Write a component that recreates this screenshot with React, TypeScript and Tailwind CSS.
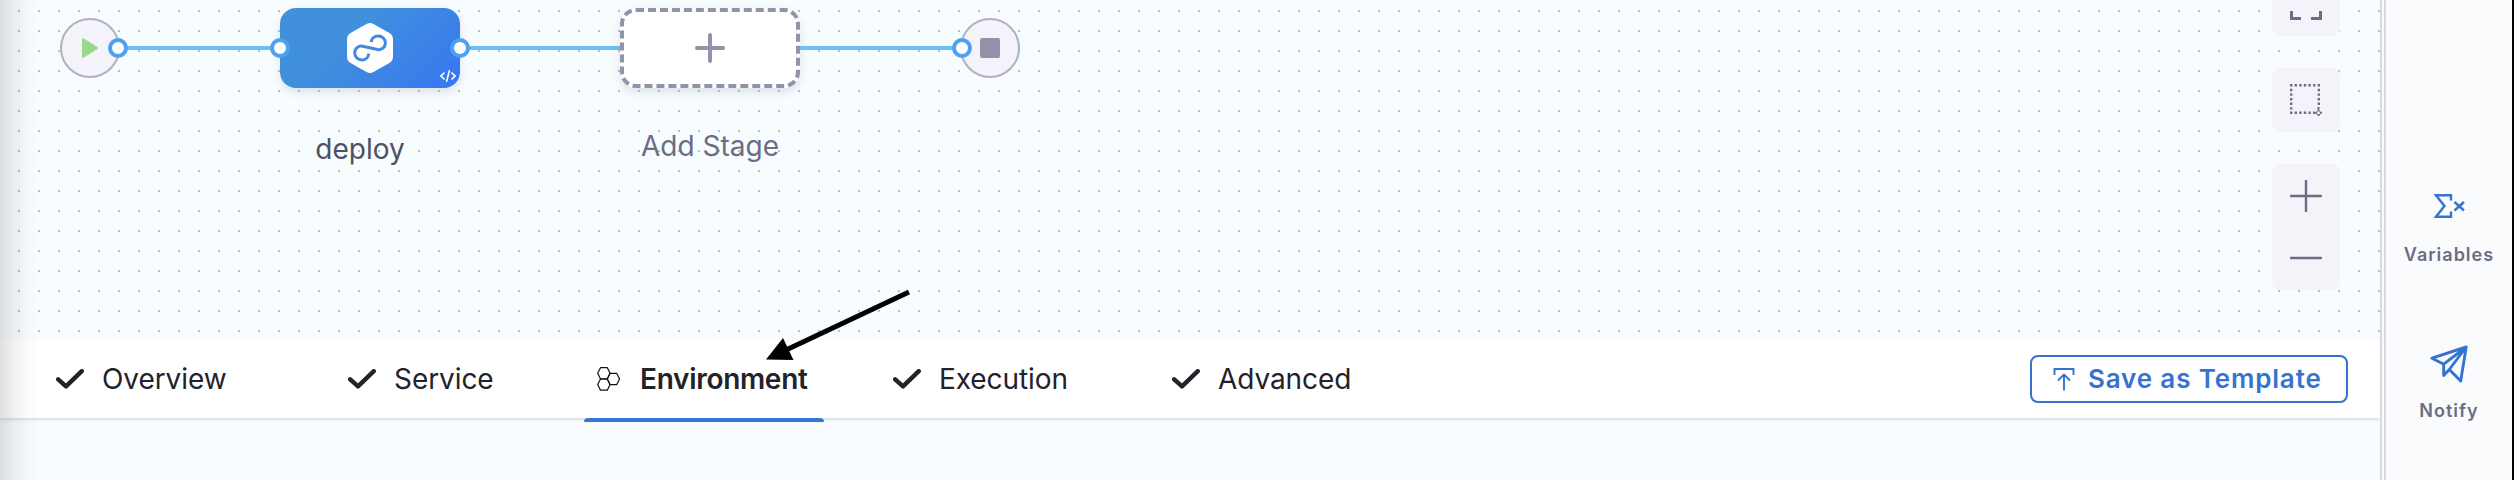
import React from "react";

const tabs = [
  { label: "Overview", box: "ml-14 w-[292px]", icon: "mr-[18px]" },
  { label: "Service", box: "w-[236px]", icon: "mr-[18px]" },
  { label: "Environment", box: "w-[240px] pl-3", icon: "mr-[20px]", active: true },
  { label: "Execution", box: "ml-[69px] w-[279px]", icon: "mr-[18px]" },
  { label: "Advanced", box: "w-[240px]", icon: "mr-[18px]" },
];

function Check() {
  return (
    <svg className="h-5 w-7 shrink-0" viewBox="0 0 28 20" fill="none">
      <path d="M2.2 10.3 L10 17.4 L25.8 2.2" stroke="#22222a" strokeWidth="4.4" strokeLinecap="round" strokeLinejoin="round" />
    </svg>
  );
}

function Hexes() {
  const hex = (x: number, y: number) =>
    `M${x - 6.2} ${y} L${x - 3.4} ${y - 5.6} H${x + 3.4} L${x + 6.2} ${y} L${x + 3.4} ${y + 5.6} H${x - 3.4} Z`;
  return (
    <svg className="h-6 w-6 shrink-0" viewBox="0 0 24 24" fill="none" stroke="#111" strokeWidth="1.2" strokeLinejoin="round">
      <path d={hex(7.9, 6.3)} />
      <path d={hex(7.9, 17.6)} />
      <path d={hex(17.4, 12)} />
    </svg>
  );
}

function Port({ side }: { side: string }) {
  return <span className={`absolute top-1/2 z-10 size-5 -translate-y-1/2 rounded-full border-4 border-[#4fa0f1] bg-white ${side}`} />;
}

function Line({ width }: { width: string }) {
  return <div className={`h-1 bg-[#69c3f2] ${width}`} />;
}

export default function App() {
  return (
    <div className="relative flex h-[480px] w-[2514px] overflow-hidden bg-[#fafbfd] font-['Inter',sans-serif]">
      <main className="flex w-[2380px] shrink-0 flex-col overflow-hidden bg-[#f8fcff]">
        <section className="relative z-10 flex h-[340px] justify-between bg-[#f7fcff]">
          <svg className="absolute inset-0 h-full w-full">
            <defs>
              <pattern id="dots" width="20" height="20" patternUnits="userSpaceOnUse">
                <rect x="18" y="10" width="2" height="2" fill="#b8bec2" />
              </pattern>
            </defs>
            <rect width="100%" height="100%" fill="url(#dots)" />
          </svg>

          <div className="relative flex items-start pt-2 pl-[60px]">
            <div className="flex h-20 items-center">
              <div className="relative flex size-[60px] items-center justify-center rounded-full border-2 border-[#b0b1c4] bg-[#f4f3f9]">
                <svg className="h-5 w-4" viewBox="0 0 16 20">
                  <path d="M0 1.5Q0-.5 2 .5L15 8.8Q16.7 10 15 11.2L2 19.6Q0 20.6 0 18.5Z" fill="#9bd88b" />
                </svg>
                <Port side="-right-2.5" />
              </div>
              <Line width="w-[160px]" />
            </div>
            <div className="flex w-[180px] flex-col items-center">
              <div className="relative flex h-20 w-[180px] items-center justify-center rounded-2xl bg-[linear-gradient(135deg,#4190dc_35%,#3878f0_95%)] shadow-[0_4px_8px_rgba(96,97,112,0.16)]">
                <Port side="-left-2.5" />
                <svg className="h-[50px] w-[46px]" viewBox="0 0 46 50" fill="none">
                  <path d="M19.500 1Q23-1 26.500 1L42 9.800Q46 12 46 16.500V33.500Q46 38 42 40.200L26.500 49Q23 51 19.500 49L4 40.200Q0 38 0 33.500V16.500Q0 12 4 9.800Z" fill="#fff" />
                  <path d="M24.200 19.200C24.500 15.500 27.500 13 31.200 13C35.200 13 38.400 16 38.400 20C38.400 24.300 34.700 27.300 30.500 26.500L15.800 23.200C11.500 22.400 7.700 25.500 7.700 29.800C7.700 33.800 10.800 36.900 14.800 36.900C18.600 36.900 21.500 34.200 21.700 30.500" stroke="#4189e2" strokeWidth="3" />
                </svg>
                <svg className="absolute right-1 bottom-1.5 h-3 w-4" viewBox="0 0 16 12" fill="none" stroke="#fff" strokeWidth="1.6">
                  <path d="M4.500 2.500L1 6L4.500 9.500M11.500 2.500L15 6L11.500 9.500M9.500 .3L6.500 11.700" />
                </svg>
                <Port side="-right-2.5" />
              </div>
              <p className="mt-[43px] pr-5 text-[28px] leading-[36px] text-[#4f5162]">deploy</p>
            </div>
            <div className="flex h-20 items-center">
              <Line width="w-[160px]" />
            </div>
            <div className="flex w-[180px] flex-col items-center">
              <div className="flex h-20 w-[180px] items-center justify-center rounded-2xl border-4 border-dashed border-[#9293ab] bg-white shadow-[0_4px_8px_rgba(96,97,112,0.16)]">
                <svg className="size-[30px]" viewBox="0 0 30 30" stroke="#9293ab" strokeWidth="4" strokeLinecap="round">
                  <path d="M15 2V28M2 15H28" />
                </svg>
              </div>
              <p className="mt-10 text-[28px] leading-[36px] text-[#6b6d85]">Add Stage</p>
            </div>
            <div className="flex h-20 items-center">
              <Line width="w-[160px]" />
              <div className="relative flex size-[60px] items-center justify-center rounded-full border-2 border-[#b0b1c4] bg-[#f4f3f9]">
                <Port side="-left-2.5" />
                <span className="size-5 rounded-[2px] bg-[#9293ab]" />
              </div>
            </div>
          </div>

          <div className="relative mr-10 flex w-[68px] flex-col gap-8">
            <div className="flex h-9 justify-center rounded-b-lg bg-[#f4f3f9] pt-[11px]">
              <svg className="h-[9px] w-8" viewBox="0 0 32 9" fill="none" stroke="#6b6d85" strokeWidth="3">
                <path d="M1.500 0V7.500H11M21 7.500H30.500V0" />
              </svg>
            </div>
            <div className="flex h-16 items-start justify-center rounded-lg bg-[#f4f3f9] pt-4">
              <svg className="size-8" viewBox="0 0 32 32" fill="none" stroke="#6b6d85" strokeWidth="2.400">
                <path d="M0 1.200H30M0 28.800H24M1.200 4.800V28M28.800 4.800V22" strokeDasharray="2.400 2.200" />
                <path d="M28.500 23V26.500M28.500 30.500V32M23 28.800H26.500M30.500 28.800H32" strokeWidth="2" />
                <circle cx="28.500" cy="28.800" r="2" strokeWidth="1" />
              </svg>
            </div>
            <div className="flex h-[126px] flex-col items-center gap-[30px] rounded-lg bg-[#f4f3f9] pt-4">
              <svg className="size-8" viewBox="0 0 32 32" stroke="#6b6d85" strokeWidth="2.400" strokeLinecap="round">
                <path d="M16 1V31M1 16H31" />
              </svg>
              <svg className="size-8" viewBox="0 0 32 32" stroke="#6b6d85" strokeWidth="2.400" strokeLinecap="round">
                <path d="M1 16H31" />
              </svg>
            </div>
          </div>
        </section>

        <nav className="relative flex h-[78px] items-center justify-between bg-white pr-8 shadow-[0_1px_4px_rgba(40,41,61,0.22)]">
          <div className="flex h-full">
            {tabs.map((t) => (
              <div key={t.label} className={`relative flex h-full shrink-0 items-center pb-px ${t.box}`}>
                <span className={`flex ${t.icon}`}>{t.active ? <Hexes /> : <Check />}</span>
                <span className={`text-[28px] leading-9 text-[#22222a] ${t.active ? "font-semibold tracking-[-0.3px]" : "tracking-[-0.08px]"}`}>{t.label}</span>
                {t.active && <span className="absolute -bottom-1 left-0 h-1 w-full rounded-t bg-[#3878d4]" />}
              </div>
            ))}
          </div>
          <button className="flex h-12 w-[318px] items-center rounded-lg border-2 border-[#3473cf] bg-white pl-[21px] text-[#3473cf]">
            <svg className="mr-[13px] h-6 w-[22px] shrink-0" viewBox="0 0 21 24" fill="none" stroke="currentColor" strokeWidth="1.900">
              <path d="M1 8V2H20V8M10.500 23.500V7.500M4.500 13.500L10.500 7.500L16.500 13.500" />
            </svg>
            <span className="text-[26px] leading-8 font-semibold tracking-[0.85px] whitespace-nowrap">Save as Template</span>
          </button>
        </nav>
      </main>

      <div className="w-1.5 shrink-0 border-x-2 border-[#d9d9e6] bg-[#fafbfd]" />

      <aside className="flex w-[126px] shrink-0 flex-col items-center pt-[194px]">
        <svg className="h-6 w-[31px]" viewBox="0 0 31 24" fill="none" stroke="#3473cf" strokeWidth="2.400">
          <path d="M17 6.500V1.300H2L10.500 12L2 22.700H17V17.500M20.500 8L30 16.500M30 8L20.500 16.500" />
        </svg>
        <span className="mt-[25px] text-[18px] leading-6 font-semibold tracking-[1px] text-[#6b6d85]">Variables</span>
        <svg className="mt-[78px] h-[38px] w-[38px]" viewBox="0 0 38 38" fill="none" stroke="#3473cf" strokeWidth="2.900" strokeLinejoin="round">
          <path d="M36.200 2L2 13.200L13.700 19.200L36.200 2L30.700 36L19.300 24.500L36.200 2M13.700 19.200V30.500L19.300 24.500" />
        </svg>
        <span className="mt-4 text-[18px] leading-6 font-semibold tracking-[1px] text-[#6b6d85]">Notify</span>
      </aside>
      <div className="w-0.5 shrink-0 bg-black" />

      <div className="pointer-events-none absolute inset-y-0 left-0 z-20 w-10 bg-[linear-gradient(90deg,rgba(0,0,0,0.12),rgba(0,0,0,0.06)_35%,rgba(0,0,0,0.015)_70%,transparent)]" />
      <svg className="pointer-events-none absolute top-[286px] left-[764px] z-20 h-[76px] w-[148px]" viewBox="0 0 148 76">
        <path d="M145 6L22 64" stroke="#000" strokeWidth="5" />
        <path d="M2 73.500L19 52L29.500 74Z" />
      </svg>
    </div>
  );
}
